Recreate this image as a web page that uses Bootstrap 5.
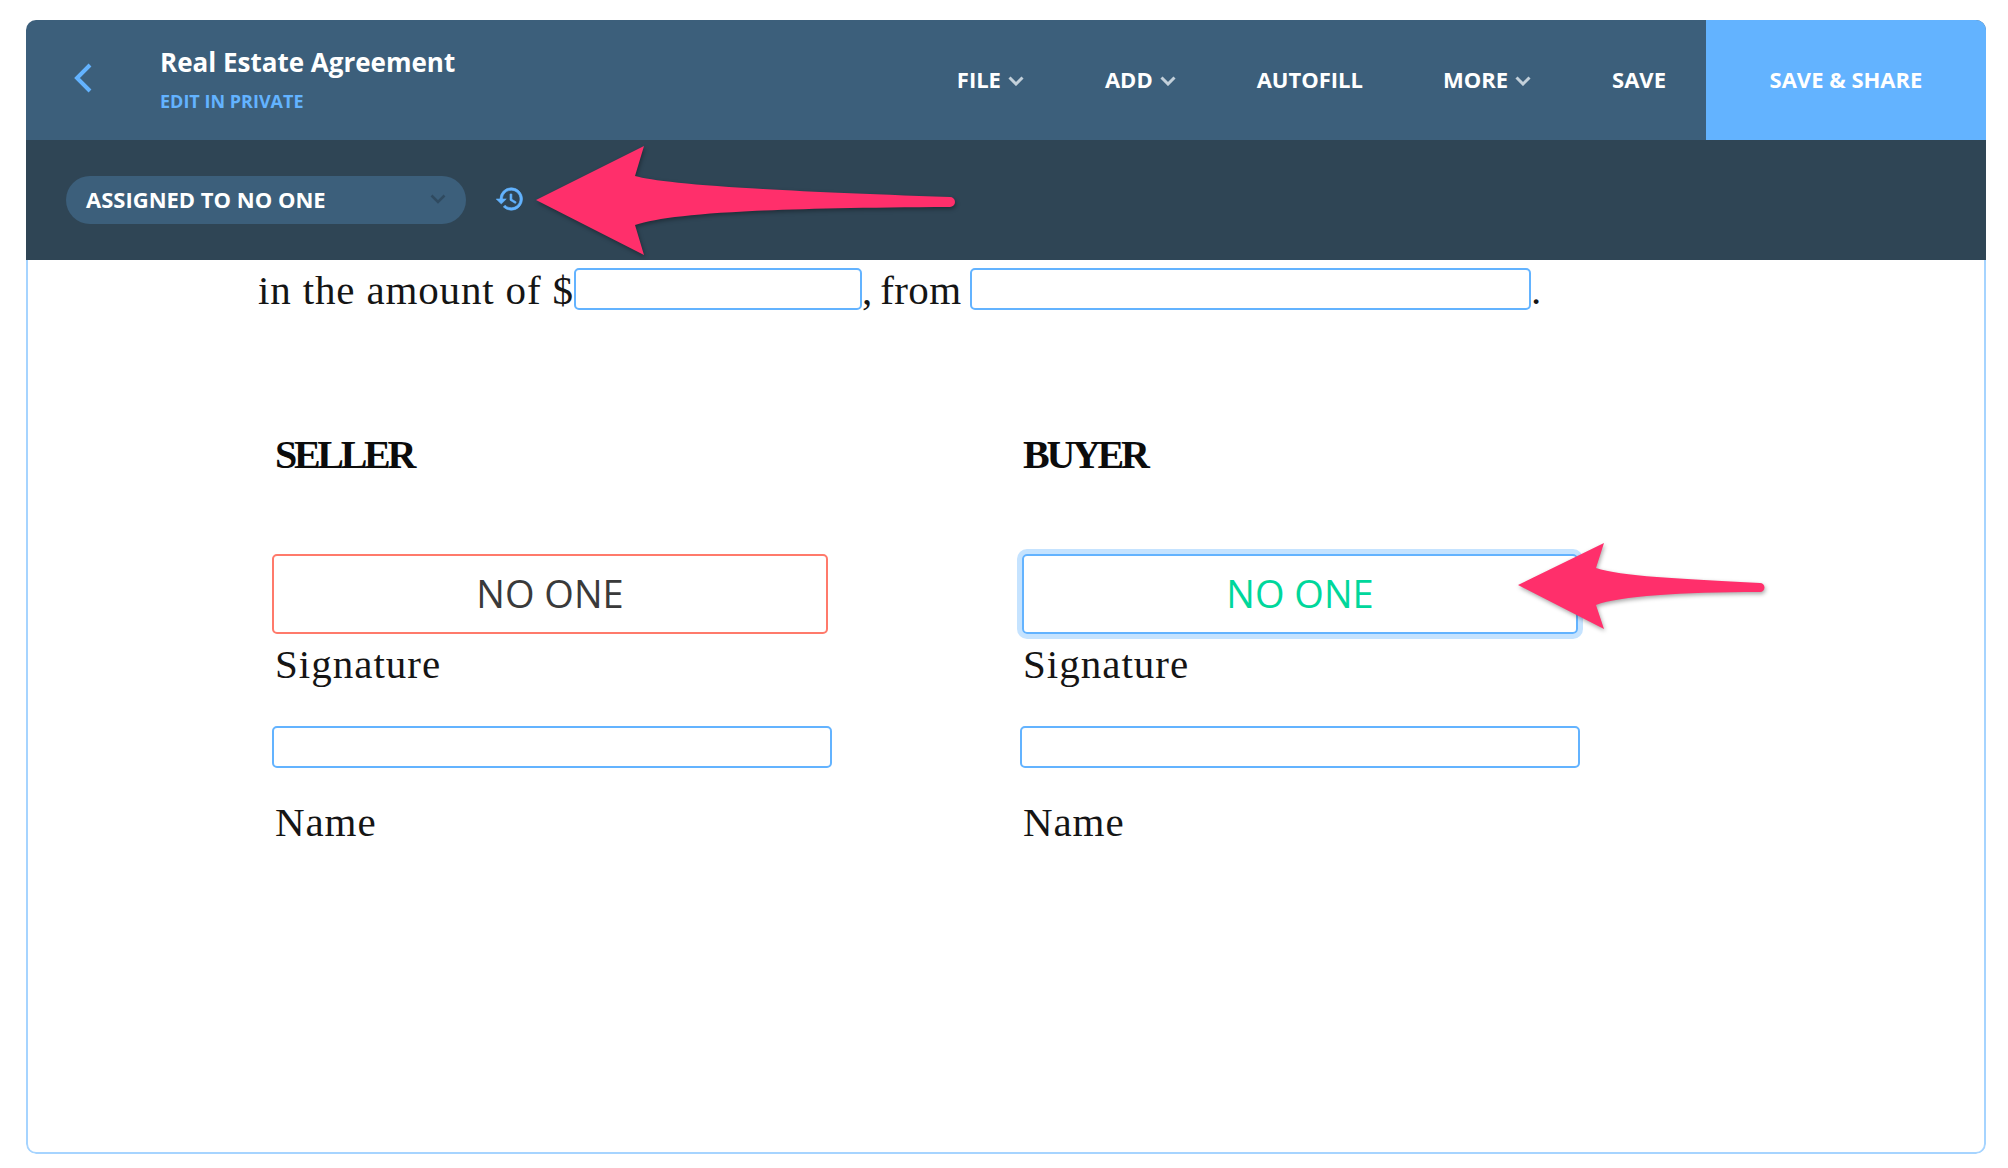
<!DOCTYPE html>
<html lang="en">
<head>
<meta charset="utf-8">
<title>Real Estate Agreement</title>
<link href="https://cdn.jsdelivr.net/npm/bootstrap@5.3.0/dist/css/bootstrap.min.css" rel="stylesheet">
<style>
body{background:#fff;font-family:"Open Sans",sans-serif;width:2008px;height:1168px;overflow:hidden;position:relative}
.doc-card{width:1960px;height:1134px;margin:20px 0 0 26px;border:0;border-radius:10px;overflow:hidden;background:#fff}
.top-bar{height:120px;background:#3c5f7b;color:#fff}
.back-link{width:134px;padding-left:47px;line-height:0;margin-top:-5px}
.doc-title{font-size:26px;font-weight:700;line-height:32px}
.doc-sub{font-size:18px;font-weight:700;line-height:24px;color:#63b3ff;margin-top:11px}
.title-block{margin-top:-1px}
.menu-item{padding:0 40px 1px;font-size:22px;font-weight:700;color:#fff;text-decoration:none;white-space:nowrap;gap:7px}
.menu-item svg{margin-top:2px;margin-right:1px}
.save-share{width:280px;padding-bottom:1px;background:#63b3ff;color:#fff;font-size:22px;font-weight:700;text-decoration:none}
.tool-bar{height:120px;background:#2f4555;padding-left:40px}
.assign-pill{width:400px;height:48px;border-radius:24px;background:#3c5f7b;color:#fff;font-size:22px;font-weight:700;padding:0 20px 2px;margin-right:29px}
.history-icon{margin-top:-3px}
.history-icon path{stroke:#63b3ff;stroke-width:.5}
.doc-body{height:894px;border:2px solid #a6d4ff;border-top:0;border-radius:0 0 10px 10px;padding:8px 0 0 244px;font-family:"Liberation Serif",serif;color:#151515}
.amount-line{font-size:41px;line-height:44px;letter-spacing:.85px;margin-left:-14px;white-space:nowrap;height:42px}
.fill-field{display:block;height:42px;border:2px solid #63b3ff;border-radius:5px;background:#fff;padding:0}
.field-amount{width:288px}
.field-from{width:561px}
.from-word{width:108px;letter-spacing:.4px;word-spacing:-3px}
.sign-col{width:748px}
.sign-head{font-size:40px;font-weight:700;letter-spacing:-3.300px;line-height:48px;margin:121px 0 0 3px;color:#0c0c0c}
.sign-box{width:556px;height:80px;border:2px solid #ff7a6b;border-radius:5px;font-family:"Open Sans",sans-serif;font-size:38px;font-weight:400;color:#3a3a3a;margin-top:75px;padding-bottom:1px}
.sign-active{border-color:#63b3ff;box-shadow:0 0 0 5px #c5e3ff;color:#00d79b;margin-left:2px}
.sign-label{font-size:41px;letter-spacing:1px;line-height:48px;margin:6px 0 0 3px}
.name-field{width:560px;margin-top:38px}
.name-label{font-size:41px;letter-spacing:.9px;line-height:48px;margin:30px 0 0 3px}
.pointer-layer{position:absolute;left:0;top:0;width:2008px;height:1168px;pointer-events:none}
.pointer-layer path{fill:#ff2f6b;filter:drop-shadow(1px 2px 2px rgba(0,0,0,.35))}
</style>
</head>
<body>
<div class="card doc-card">
  <header class="top-bar d-flex align-items-center">
    <a class="back-link" href="#" aria-label="Back"><svg width="20" height="30" viewBox="0 0 20 30"><path d="M17 2 4 15l13 13" fill="none" stroke="#63b3ff" stroke-width="4"/></svg></a>
    <div class="title-block flex-grow-1">
      <div class="doc-title">Real Estate Agreement</div>
      <div class="doc-sub">EDIT IN PRIVATE</div>
    </div>
    <nav class="d-flex align-items-center h-100">
      <a class="menu-item d-flex align-items-center" href="#">FILE<svg width="16" height="10" viewBox="0 0 16 10"><path d="M1.500 1.500 8 8l6.500-6.500" fill="none" stroke="#c3d0da" stroke-width="3"/></svg></a>
      <a class="menu-item d-flex align-items-center" href="#">ADD<svg width="16" height="10" viewBox="0 0 16 10"><path d="M1.500 1.500 8 8l6.500-6.500" fill="none" stroke="#c3d0da" stroke-width="3"/></svg></a>
      <a class="menu-item d-flex align-items-center" href="#">AUTOFILL</a>
      <a class="menu-item d-flex align-items-center" href="#">MORE<svg width="16" height="10" viewBox="0 0 16 10"><path d="M1.500 1.500 8 8l6.500-6.500" fill="none" stroke="#c3d0da" stroke-width="3"/></svg></a>
      <a class="menu-item d-flex align-items-center" href="#">SAVE</a>
      <a class="save-share d-flex align-items-center justify-content-center h-100" href="#">SAVE &amp; SHARE</a>
    </nav>
  </header>
  <div class="tool-bar d-flex align-items-center">
    <div class="assign-pill d-flex align-items-center justify-content-between">
      <span>ASSIGNED TO NO ONE</span>
      <svg width="16" height="10" viewBox="0 0 16 10"><path d="M1.500 1.500 8 8l6.500-6.500" fill="none" stroke="#2f4a60" stroke-width="2.500"/></svg>
    </div>
    <svg class="history-icon" width="30" height="30" viewBox="0 0 24 24"><path fill="#63b3ff" d="M13 3a9 9 0 0 0-9 9H1l3.890 3.890.07.14L9 12H6c0-3.870 3.130-7 7-7s7 3.130 7 7-3.130 7-7 7c-1.930 0-3.680-.79-4.940-2.060l-1.420 1.420A8.954 8.954 0 0 0 13 21a9 9 0 0 0 0-18zm-1 5v5l4.280 2.540.72-1.210-3.500-2.080V8H12z"/></svg>
  </div>
  <main class="doc-body">
    <div class="amount-line d-flex">
      <span>in the amount of $</span><span class="fill-field field-amount"></span><span class="from-word">, from</span><span class="fill-field field-from"></span><span>.</span>
    </div>
    <div class="d-flex">
      <section class="sign-col">
        <div class="sign-head">SELLER</div>
        <div class="sign-box d-flex align-items-center justify-content-center">NO ONE</div>
        <div class="sign-label">Signature</div>
        <div class="fill-field name-field"></div>
        <div class="name-label">Name</div>
      </section>
      <section class="sign-col">
        <div class="sign-head">BUYER</div>
        <div class="sign-box sign-active d-flex align-items-center justify-content-center">NO ONE</div>
        <div class="sign-label">Signature</div>
        <div class="fill-field name-field"></div>
        <div class="name-label">Name</div>
      </section>
    </div>
  </main>
</div>
<svg class="pointer-layer" viewBox="0 0 2008 1168" aria-hidden="true">
  <path d="M536 200 644 146 635 176C660 183 740 190 950 197A5 5 0 0 1 950 207C750 208 670 214 635 225L644 255Z"/>
  <path d="M1518 585 1604 543 1596 568C1620 576 1680 579 1760 583A4.500 4.500 0 0 1 1760 592C1680 592 1620 596 1596 605L1604 629Z"/>
</svg>
<script src="https://cdn.jsdelivr.net/npm/bootstrap@5.3.0/dist/js/bootstrap.bundle.min.js"></script>
</body>
</html>
